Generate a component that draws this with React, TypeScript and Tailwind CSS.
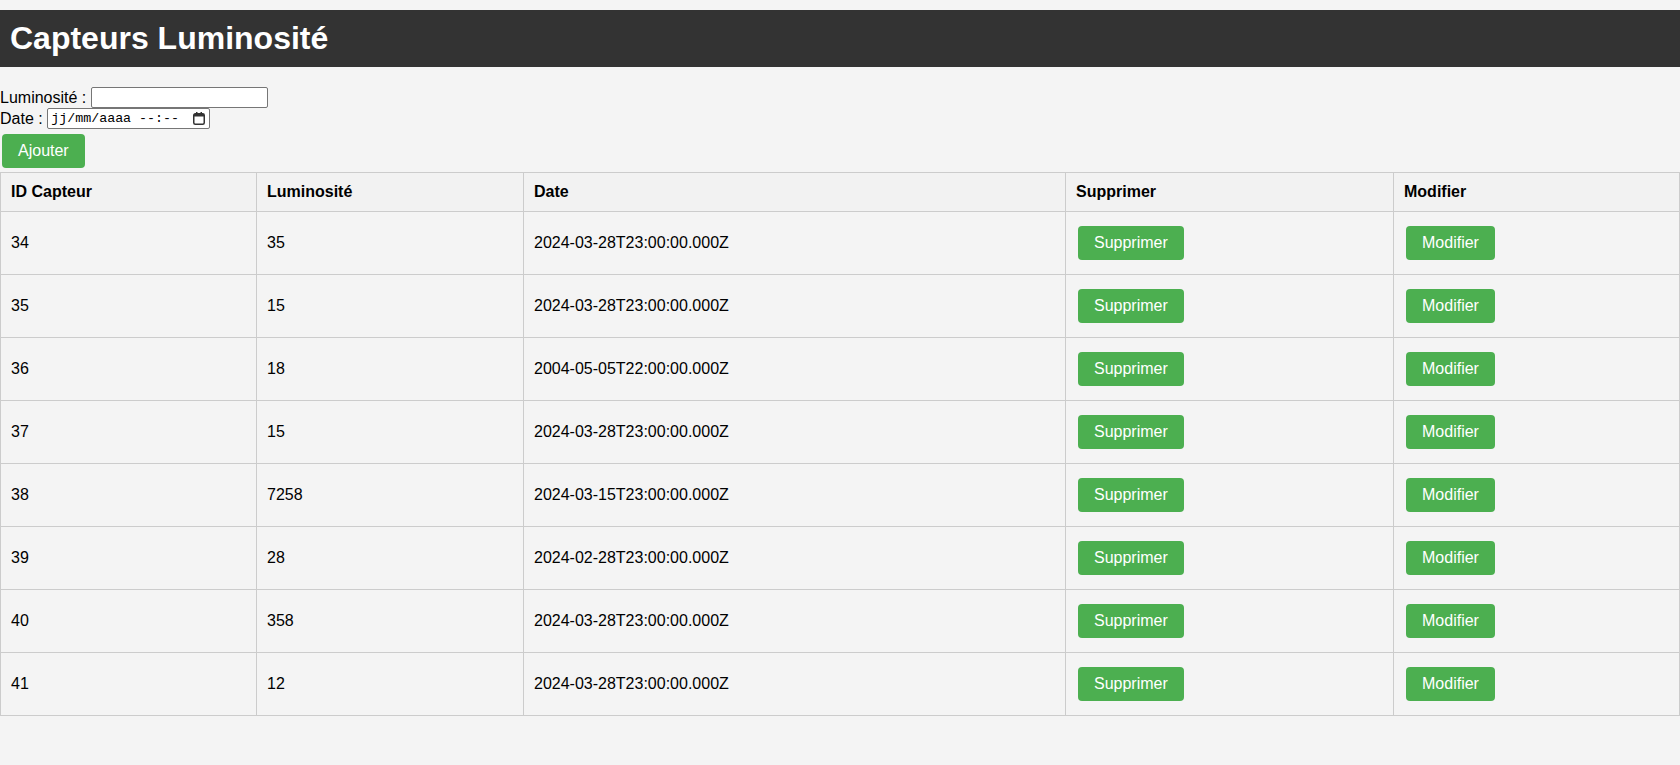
import React from "react";

type Mesure = { id: number; lum: number; date: string };

const mesures: Mesure[] = [
  { id: 34, lum: 35, date: "2024-03-28T23:00:00.000Z" },
  { id: 35, lum: 15, date: "2024-03-28T23:00:00.000Z" },
  { id: 36, lum: 18, date: "2004-05-05T22:00:00.000Z" },
  { id: 37, lum: 15, date: "2024-03-28T23:00:00.000Z" },
  { id: 38, lum: 7258, date: "2024-03-15T23:00:00.000Z" },
  { id: 39, lum: 28, date: "2024-02-28T23:00:00.000Z" },
  { id: 40, lum: 358, date: "2024-03-28T23:00:00.000Z" },
  { id: 41, lum: 12, date: "2024-03-28T23:00:00.000Z" },
];

function CalendarIcon() {
  return (
    <svg width="12" height="13" viewBox="0 0 12 13" className="block">
      <rect x="0.75" y="1.75" width="10.5" height="10.5" rx="1.5" fill="none" stroke="#333" strokeWidth="1.5" />
      <rect x="1" y="2" width="10" height="2.5" fill="#333" />
      <rect x="3" y="0" width="1.5" height="2.5" fill="#333" />
      <rect x="7.5" y="0" width="1.5" height="2.5" fill="#333" />
    </svg>
  );
}

function GreenButton({ label }: { label: string }) {
  return (
    <button className="m-[2px] h-[34px] px-4 rounded-[4px] bg-[#4caf50] text-white text-[16px] leading-[18px] cursor-pointer">
      {label}
    </button>
  );
}

export default function App() {
  return (
    <div className="min-h-[765px] bg-[#f4f4f4] pt-[10px] text-black text-[16px] font-['Liberation_Sans',Arial,sans-serif]">
      <header className="bg-[#333333] p-[10px]">
        <h1 className="text-[32px] leading-[37px] font-bold text-white">Capteurs Luminosité</h1>
      </header>

      <form className="mt-[20px]" onSubmit={(e) => e.preventDefault()}>
        <div className="flex items-center h-[21px]">
          <span>Luminosité :&nbsp;</span>
          <input
            type="text"
            className="w-[177px] h-[21px] bg-white border border-[#767676] rounded-[2px] px-[2px] text-[13px] outline-none"
          />
        </div>
        <div className="flex items-center h-[21px]">
          <span>Date :&nbsp;</span>
          <div className="w-[163px] h-[21px] bg-white border border-[#767676] rounded-[2px] pl-[3px] pr-[4px] flex items-center justify-between">
            <span className="font-['Liberation_Mono',monospace] text-[13.33px] leading-[15px] whitespace-pre">jj/mm/aaaa --:--</span>
            <CalendarIcon />
          </div>
        </div>
        <div className="pt-[3px] pb-[2px]">
          <GreenButton label="Ajouter" />
        </div>
      </form>

      <table className="w-full table-fixed border-collapse">
        <colgroup>
          <col className="w-[256px]" />
          <col className="w-[267px]" />
          <col className="w-[542px]" />
          <col className="w-[328px]" />
          <col />
        </colgroup>
        <thead>
          <tr className="bg-[#f2f2f2] h-[39px]">
            {["ID Capteur", "Luminosité", "Date", "Supprimer", "Modifier"].map((h) => (
              <th key={h} className="border border-[#cccccc] px-[10px] text-left font-bold">
                {h}
              </th>
            ))}
          </tr>
        </thead>
        <tbody>
          {mesures.map((m) => (
            <tr key={m.id} className="h-[63px]">
              <td className="border border-[#cccccc] px-[10px]">{m.id}</td>
              <td className="border border-[#cccccc] px-[10px]">{m.lum}</td>
              <td className="border border-[#cccccc] px-[10px]">{m.date}</td>
              <td className="border border-[#cccccc] px-[10px]">
                <GreenButton label="Supprimer" />
              </td>
              <td className="border border-[#cccccc] px-[10px]">
                <GreenButton label="Modifier" />
              </td>
            </tr>
          ))}
        </tbody>
      </table>
    </div>
  );
}
